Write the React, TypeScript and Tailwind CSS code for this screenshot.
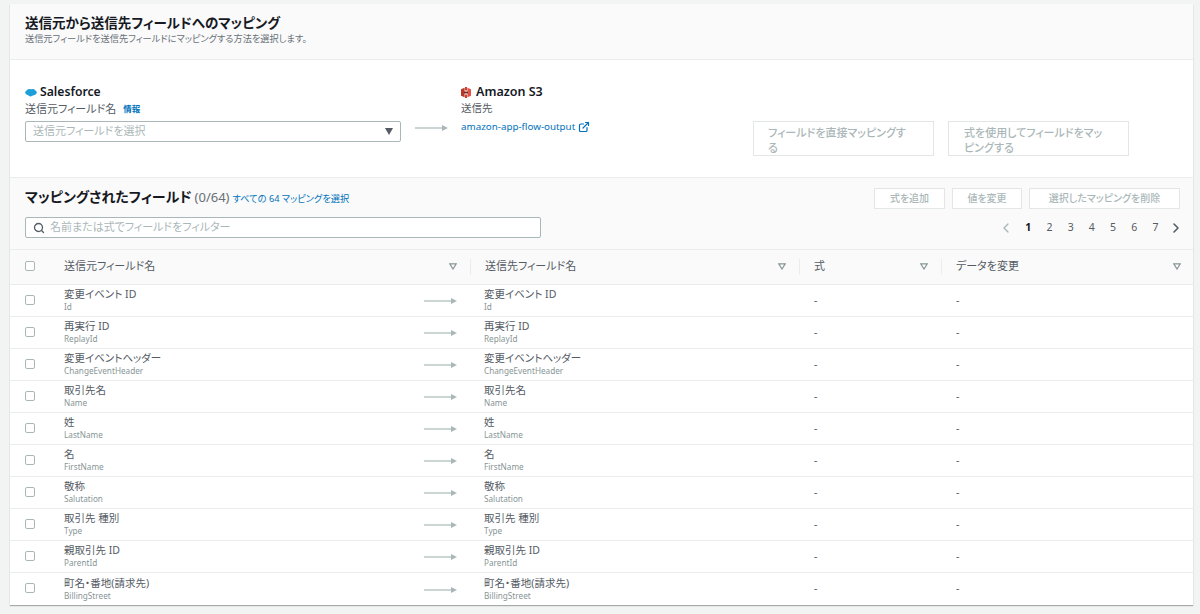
import { Search, ExternalLink, ChevronLeft, ChevronRight } from 'lucide-react'

const rows = [
  { label: '変更イベント ID', name: 'Id' },
  { label: '再実行 ID', name: 'ReplayId' },
  { label: '変更イベントヘッダー', name: 'ChangeEventHeader' },
  { label: '取引先名', name: 'Name' },
  { label: '姓', name: 'LastName' },
  { label: '名', name: 'FirstName' },
  { label: '敬称', name: 'Salutation' },
  { label: '取引先 種別', name: 'Type' },
  { label: '親取引先 ID', name: 'ParentId' },
  { label: '町名・番地(請求先)', name: 'BillingStreet' },
]

const gridCols = 'grid grid-cols-[40px_421px_329px_142px_1fr]'

function Arrow({ className }: { className?: string }) {
  return (
    <svg width="33" height="8" viewBox="0 0 33 8" className={className}>
      <path d="M0 4h27" stroke="#aab7b8" strokeWidth="1.2" />
      <path d="M27 1l6 3-6 3z" fill="#aab7b8" />
    </svg>
  )
}

function Checkbox() {
  return <span className="block w-[10px] h-[10px] -mt-[2px] rounded-[2px] border border-[#aab7b8] bg-white" />
}

function SortIcon() {
  return (
    <svg width="8" height="7" viewBox="0 0 8 7">
      <path d="M0.8 0.8h6.4L4 6z" fill="#fff" stroke="#879596" strokeWidth="1.2" />
    </svg>
  )
}

function SalesforceLogo() {
  return (
    <svg width="12" height="9" viewBox="0 0 12 9">
      <ellipse cx="6" cy="4.5" rx="5.8" ry="3.2" fill="#1f9fd9" />
      <circle cx="4" cy="3" r="2" fill="#1f9fd9" />
      <circle cx="8" cy="3.2" r="2.2" fill="#1f9fd9" />
      <circle cx="5.5" cy="6.4" r="2" fill="#1f9fd9" />
    </svg>
  )
}

function S3Logo() {
  return (
    <svg width="10" height="11" viewBox="0 0 10 11">
      <path d="M0 2.2L3.6 0.8V10.2L0 8.8z" fill="#b5382a" />
      <path d="M10 2.2L6.4 0.8V10.2L10 8.8z" fill="#e05243" />
      <path d="M4 0h2v3.4H4zM4 7.6h2V11H4z" fill="#d1402f" />
      <path d="M3 4.6h4v1.8H3z" fill="#7a2418" />
    </svg>
  )
}

function HeaderCell({ title, divider, last }: { title: string; divider?: boolean; last?: boolean }) {
  return (
    <div className={`relative flex items-center justify-between pl-[14px] pb-[2px] ${last ? 'pr-[12px]' : 'pr-[14px]'}`}>
      <span className="text-[11px] text-[#545b64]">{title}</span>
      <SortIcon />
      {divider && <span className="absolute right-0 top-[9px] bottom-[9px] w-px bg-[#eaeded]" />}
    </div>
  )
}

function DisabledButton({ children, className }: { children: string; className?: string }) {
  return (
    <span className={`flex items-center justify-center h-[21px] border border-[#e2e6e6] bg-white text-[10px] font-medium text-[#aab7b8] ${className ?? ''}`}>
      {children}
    </span>
  )
}

export default function App() {
  return (
    <div className="min-h-[614px] bg-[#f2f3f3] pl-[10px] pr-[7px] pt-[4px] font-['Noto_Sans','Noto_Sans_CJK_JP',sans-serif] [font-feature-settings:'palt'] overflow-hidden">
      <div className="bg-white shadow-[0_1px_1px_rgba(0,0,0,0.3)]">
        <div className="h-[56px] bg-[#fafafa] border-b border-[#eaeded] pl-[15px] pt-[10px]">
          <h2 className="text-[13.5px] leading-[18px] font-bold text-[#16191f]">送信元から送信先フィールドへのマッピング</h2>
          <p className="text-[9.2px] leading-[14px] text-[#687078]">送信元フィールドを送信先フィールドにマッピングする方法を選択します。</p>
        </div>

        <div className="h-[118px] border-b border-[#eaeded] flex pl-[15px] pt-[24px]">
          <div className="w-[376px]">
            <div className="flex items-center gap-[3px] h-[16px]">
              <SalesforceLogo />
              <span className="text-[12.2px] font-semibold text-[#16191f]">Salesforce</span>
            </div>
            <div className="flex items-center gap-[7px] h-[18px] text-[11px] text-[#545b64]">
              送信元フィールド名
              <span className="text-[8.5px] font-bold text-[#0073bb]">情報</span>
            </div>
            <div className="mt-[3px] h-[21px] flex items-center justify-between px-[7px] rounded-[2px] border border-[#aab7b8] bg-white text-[11px] text-[#aab7b8]">
              送信元フィールドを選択
              <svg width="8" height="7" viewBox="0 0 8 7"><path d="M0 0h8L4 7z" fill="#545b64" /></svg>
            </div>
          </div>
          <Arrow className="ml-[14px] mt-[40px]" />
          <div className="ml-[13px] w-[292px]">
            <div className="flex items-center gap-[5px] h-[16px]">
              <S3Logo />
              <span className="text-[12.5px] font-semibold text-[#16191f]">Amazon S3</span>
            </div>
            <div className="h-[18px] flex items-center text-[10.5px] text-[#545b64]">送信先</div>
            <div className="mt-[1px] flex items-center gap-[3px] text-[9.8px] leading-[16px] text-[#0073bb]">
              amazon-app-flow-output
              <ExternalLink size={12} strokeWidth={2.4} />
            </div>
          </div>
          <span className="mt-[37px] w-[181px] h-[35px] pl-[14px] pr-[20px] py-[3px] border border-[#e2e6e6] text-[11px] leading-[15px] font-medium text-[#aab7b8]">フィールドを直接マッピングする</span>
          <span className="ml-[14px] mt-[37px] w-[181px] h-[35px] pl-[15px] pr-[22px] py-[3px] border border-[#e2e6e6] text-[11px] leading-[15px] font-medium text-[#aab7b8]">式を使用してフィールドをマッピングする</span>
        </div>

        <div className="h-[72px] bg-[#fafafa] border-b border-[#eaeded] flex justify-between pl-[15px] pr-[13px] pt-[8px]">
          <div className="w-[516px]">
            <div className="flex items-baseline h-[21px]">
              <h3 className="text-[14px] font-bold text-[#16191f]">マッピングされたフィールド</h3>
              <span className="ml-[3px] text-[13px] text-[#687078]">(0/64)</span>
              <span className="ml-[3px] text-[9.2px] text-[#0073bb]">すべての 64 マッピングを選択</span>
            </div>
            <div className="mt-[10px] h-[21px] flex items-center gap-[5px] px-[7px] rounded-[2px] border border-[#aab7b8] bg-white text-[11px] text-[#aab7b8]">
              <Search size={12} strokeWidth={2.6} className="text-[#545b64]" />
              名前または式でフィールドをフィルター
            </div>
          </div>
          <div className="flex flex-col items-end pt-[2px]">
            <div className="flex gap-[7px]">
              <DisabledButton className="w-[71px]">式を追加</DisabledButton>
              <DisabledButton className="w-[70px]">値を変更</DisabledButton>
              <DisabledButton className="w-[151px]">選択したマッピングを削除</DisabledButton>
            </div>
            <div className="mt-[8px] flex items-center h-[21px] text-[10.5px] text-[#545b64]">
              <ChevronLeft size={16} className="text-[#aab7b8] mr-[4px]" />
              {[1, 2, 3, 4, 5, 6, 7].map((n) => (
                <span key={n} className={`w-[21.2px] text-center ${n === 1 ? 'font-bold text-[#16191f]' : ''}`}>{n}</span>
              ))}
              <ChevronRight size={16} strokeWidth={2.4} className="ml-[2px] text-[#545b64] -mr-[4px]" />
            </div>
          </div>
        </div>

        <div className={`${gridCols} h-[35px] bg-[#fafafa] border-b border-[#eaeded]`}>
          <div className="relative flex items-center pl-[15px]">
            <Checkbox />
          </div>
          <HeaderCell title="送信元フィールド名" divider />
          <HeaderCell title="送信先フィールド名" divider />
          <HeaderCell title="式" divider />
          <HeaderCell title="データを変更" last />
        </div>

        {rows.map((row) => (
          <div key={row.name} className={`${gridCols} h-[32px] border-b border-[#eaeded] last:border-b-0 text-[#545b64]`}>
            <div className="flex items-center pl-[15px]">
              <Checkbox />
            </div>
            <div className="flex items-center justify-between pl-[14px] pr-[14px]">
              <div>
                <div className="text-[10.5px] leading-[13px]">{row.label}</div>
                <div className="text-[8.2px] leading-[12px] text-[#879596]">{row.name}</div>
              </div>
              <Arrow className="mt-[1px]" />
            </div>
            <div className="flex items-center pl-[13px]">
              <div>
                <div className="text-[10.5px] leading-[13px]">{row.label}</div>
                <div className="text-[8.2px] leading-[12px] text-[#879596]">{row.name}</div>
              </div>
            </div>
            <div className="flex items-center pl-[14px] text-[10.5px]">-</div>
            <div className="flex items-center pl-[14px] text-[10.5px]">-</div>
          </div>
        ))}
      </div>
    </div>
  )
}
